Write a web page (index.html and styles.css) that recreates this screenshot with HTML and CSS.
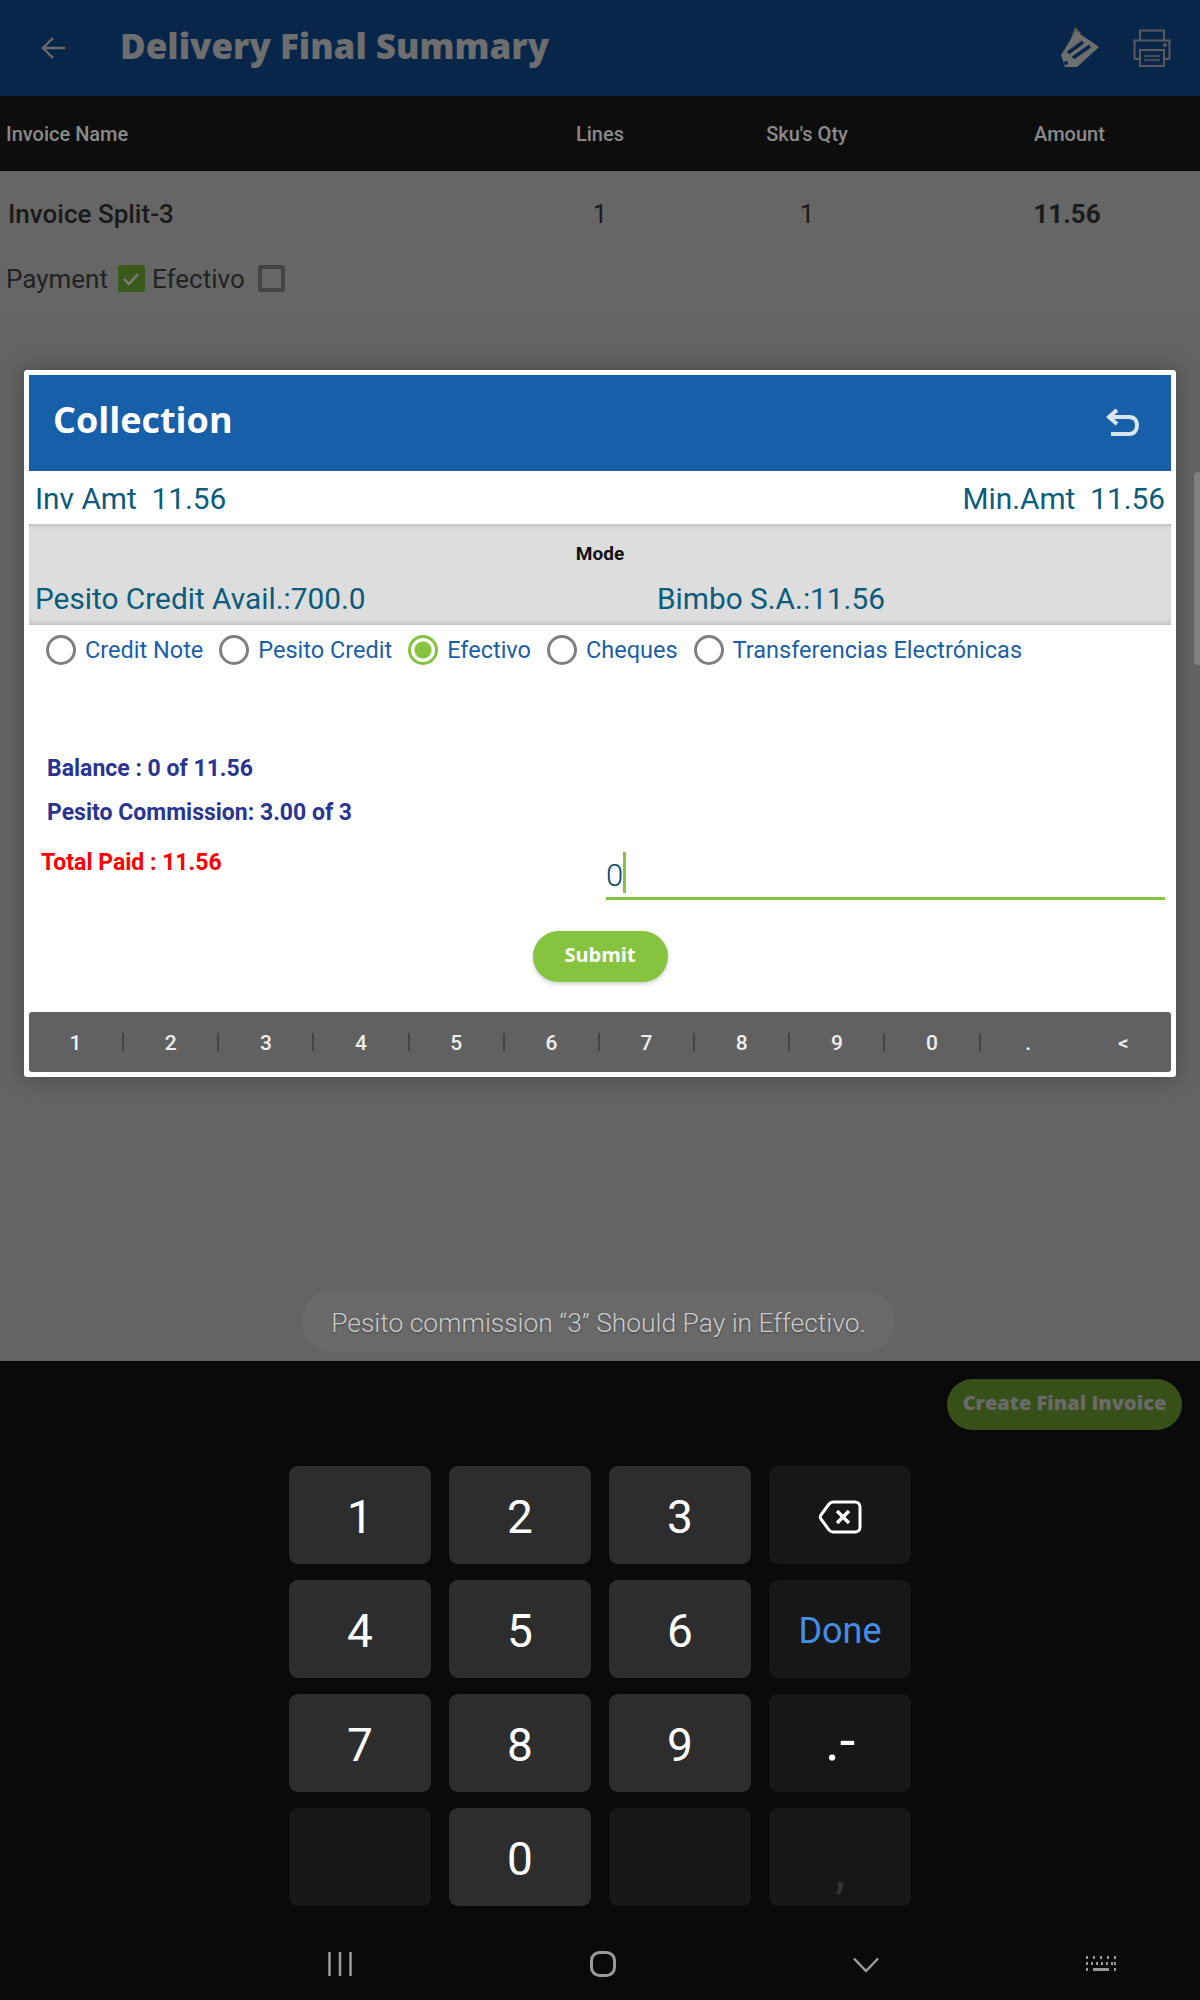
FILE: index.html
```html
<!DOCTYPE html>
<html lang="en">
<head>
    <meta charset="UTF-8">
    <title>Delivery Final Summary</title>
    <link rel="stylesheet" href="styles.css">
</head>
<body>

<div class="screen">
    <header class="app-bar">
        <svg class="back-icon" width="30" height="30" viewBox="0 0 30 30"><path d="M26 15H5M14 5 4 15l10 10" fill="none" stroke="#6b6b6b" stroke-width="2.4"/></svg>
        <h1>Delivery Final Summary</h1>
        <svg class="pen-icon" width="40" height="42" viewBox="0 0 40 42">
            <path d="M10 14 15 0l6 6z" fill="#5a5a5a"/>
            <path d="M16 4 39 20 17 40H5L1 28z" fill="#6e6e6e"/>
            <path d="M8 26 23 15M13 31 30 19" stroke="#07264a" stroke-width="3.500"/>
            <circle cx="6" cy="36" r="2" fill="#07264a"/>
        </svg>
        <svg class="print-icon" width="38" height="38" viewBox="0 0 38 38" fill="none" stroke="#5a5a5a" stroke-width="2">
            <path d="M7 11V1.500h24V11"/>
            <path d="M7 30H1.500V11.500h35V30H31"/>
            <rect x="7" y="21" width="24" height="16"/>
            <path d="M11 27h16M11 31h16" stroke-width="1.500"/>
            <circle cx="32" cy="16" r="1" fill="#5a5a5a"/>
        </svg>
    </header>

    <div class="table-head">
        <span class="col-name">Invoice Name</span>
        <span class="col-lines">Lines</span>
        <span class="col-qty">Sku's Qty</span>
        <span class="col-amount">Amount</span>
    </div>

    <div class="table-row">
        <span class="col-name">Invoice Split-3</span>
        <span class="col-lines">1</span>
        <span class="col-qty">1</span>
        <span class="col-amount"><b>11.56</b></span>
    </div>

    <div class="payment-row">
        <span>Payment</span>
        <span class="check check-on">
            <svg width="20" height="20" viewBox="0 0 20 20"><path d="M3 10l5 5 9-10" fill="none" stroke="#7d7d7d" stroke-width="2.400"/></svg>
        </span>
        <span>Efectivo</span>
        <span class="check check-off"></span>
    </div>

    <div class="page-rest"></div>

    <div class="modal">
        <div class="modal-head">
            <h2>Collection</h2>
            <svg width="34" height="32" viewBox="0 0 34 32"><path d="M11 3 3 10l8 7M4 10h19c6 0 8 4 8 8s-2 9-8 9H5" fill="none" stroke="#dbe5f0" stroke-width="4"/></svg>
        </div>

        <div class="amounts">
            <span>Inv Amt&nbsp; 11.56</span>
            <span>Min.Amt&nbsp; 11.56</span>
        </div>

        <div class="mode-panel">
            <div class="mode-title">Mode</div>
            <div class="mode-values">
                <span class="credit-avail">Pesito Credit Avail.:700.0</span>
                <span>Bimbo S.A.:11.56</span>
            </div>
        </div>

        <div class="radios">
            <span class="radio"></span><span class="radio-label">Credit Note</span>
            <span class="radio"></span><span class="radio-label">Pesito Credit</span>
            <span class="radio radio-on"></span><span class="radio-label">Efectivo</span>
            <span class="radio"></span><span class="radio-label">Cheques</span>
            <span class="radio"></span><span class="radio-label">Transferencias Electrónicas</span>
        </div>

        <div class="balance">
            <p>Balance : 0 of 11.56</p>
            <p>Pesito Commission: 3.00 of 3</p>
        </div>

        <div class="pay-row">
            <div class="total-paid">Total Paid : 11.56</div>
            <div class="amount-input"><span>0</span><i class="caret"></i></div>
        </div>

        <button class="submit">Submit</button>

        <div class="num-strip">
            <span>1</span><span>2</span><span>3</span><span>4</span>
            <span>5</span><span>6</span><span>7</span><span>8</span>
            <span>9</span><span>0</span><span>.</span><span>&lt;</span>
        </div>
    </div>

    <div class="scroll-thumb"></div>
    <div class="toast">Pesito commission “3” Should Pay in Effectivo.</div>

    <div class="keyboard">
        <div class="invoice-row">
            <button class="final-invoice">Create Final Invoice</button>
        </div>
        <div class="keys">
            <div class="key">1</div>
            <div class="key">2</div>
            <div class="key">3</div>
            <div class="key key-dark">
                <svg width="44" height="34" viewBox="0 0 44 34" fill="none" stroke="#fff" stroke-width="3">
                    <path d="M15 2h22c3 0 5 2 5 5v20c0 3-2 5-5 5H15c-2 0-3-1-4-2L3 19c-1-1-1-3 0-4l8-11c1-1 2-2 4-2z"/>
                    <path d="M19 11l12 12M31 11 19 23" stroke-width="3.500"/>
                </svg>
            </div>
            <div class="key">4</div>
            <div class="key">5</div>
            <div class="key">6</div>
            <div class="key key-dark key-done">Done</div>
            <div class="key">7</div>
            <div class="key">8</div>
            <div class="key">9</div>
            <div class="key key-dark key-symbol">.-</div>
            <div class="key key-dark"></div>
            <div class="key">0</div>
            <div class="key key-dark"></div>
            <div class="key key-dark key-comma">,</div>
        </div>
        <nav class="nav-bar">
            <svg class="nav-recent" width="24" height="24" viewBox="0 0 24 24"><path d="M1.500 0v24M12 0v24M22.500 0v24" stroke="#9a9a9a" stroke-width="2.500"/></svg>
            <svg class="nav-home" width="26" height="26" viewBox="0 0 26 26"><rect x="1.500" y="1.500" width="23" height="23" rx="8" fill="none" stroke="#9a9a9a" stroke-width="3"/></svg>
            <svg class="nav-down" width="26" height="16" viewBox="0 0 26 16"><path d="M1 1.500 13 14 25 1.500" fill="none" stroke="#9a9a9a" stroke-width="2.500"/></svg>
            <svg class="nav-kbd" width="30" height="16" viewBox="0 0 30 16" fill="#9a9a9a">
                <path d="M0 0h2v3H0zM7 0h2v3H7zM14 0h2v3h-2zM21 0h2v3h-2zM28 0h2v3h-2zM0 6h2v3H0zM5 6h2v3H5zM10 6h2v3h-2zM15 6h2v3h-2zM20 6h2v3h-2zM25 6h2v3h-2zM28 6h2v3h-2zM0 12h2v3H0zM7 12h16v3H7zM28 12h2v3h-2z"/>
            </svg>
        </nav>
    </div>
</div>

</body>
</html>
```

FILE: styles.css
```css
* {
    box-sizing: border-box;
}

body {
    margin: 0;
    font-family: Roboto, sans-serif;
}

.screen {
    position: relative;
    width: 1200px;
    height: 2000px;
    overflow: hidden;
    display: flex;
    flex-direction: column;
    background: #666;
}

/* top bar */
.app-bar {
    height: 96px;
    background: #07264a;
    display: flex;
    align-items: center;
    padding: 0 29px 0 39px;
}

.app-bar h1 {
    margin: 0 0 5px 51px;
    flex: 1;
    font-family: "Open Sans", sans-serif;
    font-size: 35px;
    font-weight: 800;
    color: #6e6e6e;
}

.pen-icon {
    margin-right: 33px;
}

/* invoice table */
.table-head, .table-row {
    display: grid;
    grid-template-columns: 540px 120px 294px 1fr;
    align-items: center;
    text-align: center;
}

.table-head {
    height: 75px;
    background: #0d0d0d;
    color: #8a8a8a;
    font-size: 20px;
    font-weight: 500;
}

.table-head .col-amount {
    padding-right: 15px;
}

.table-row {
    height: 86px;
    font-size: 26px;
    font-weight: 400;
    color: #1a1a1a;
}

.col-name {
    text-align: left;
    padding-left: 6px;
}

.table-row .col-name {
    padding-left: 8px;
    font-weight: 500;
}

.table-row .col-amount {
    padding-right: 20px;
}

.payment-row {
    height: 62px;
    padding: 0 0 18px 6px;
    display: flex;
    align-items: center;
    gap: 10px;
    font-size: 26px;
    color: #222;
    border-bottom: 1px solid #636363;
}

.check {
    width: 27px;
    height: 27px;
    border: 4px solid #444;
    border-radius: 3px;
    display: flex;
    align-items: center;
    justify-content: center;
}

.check-on {
    background: #3a5a1c;
    border: none;
    margin-right: -3px;
}

.check-off {
    margin-left: 3px;
}

.page-rest {
    flex: 1;
    background: #646464;
}

/* collection dialog */
.modal {
    position: absolute;
    top: 370px;
    left: 24px;
    width: 1152px;
    height: 707px;
    padding: 5px;
    background: #fff;
    border-radius: 3px;
    box-shadow: 0 0 24px rgba(0,0,0,0.3);
}

.modal-head {
    height: 96px;
    background: #185fa9;
    display: flex;
    align-items: center;
    justify-content: space-between;
    padding: 0 31px 0 24px;
}

.modal-head h2 {
    margin: 0 0 8px 0;
    font-family: "Open Sans", sans-serif;
    font-size: 36px;
    font-weight: 700;
    color: #fff;
}

.amounts {
    height: 53px;
    display: flex;
    justify-content: space-between;
    align-items: center;
    padding: 2px 6px 0;
    font-size: 29.8px;
    font-weight: 400;
    color: #0a5c7c;
}

.mode-panel {
    height: 101px;
    background: #dddddd;
    box-shadow: inset 0 5px 4px -3px rgba(0,0,0,0.15), inset 0 -5px 4px -3px rgba(0,0,0,0.15);
}

.mode-title {
    text-align: center;
    font-size: 19px;
    font-weight: 700;
    color: #111;
    padding-top: 18px;
    line-height: 24px;
}

.mode-values {
    display: flex;
    padding: 15px 6px 0;
    font-size: 29.8px;
    font-weight: 400;
    color: #0a5c7c;
    line-height: 36px;
}

.credit-avail {
    width: 622px;
}

.radios {
    height: 50px;
    display: flex;
    align-items: center;
    padding: 0 0 0 17px;
    font-size: 23.5px;
    color: #1a5fa8;
}

.radio {
    width: 30px;
    height: 30px;
    border: 3px solid #808080;
    border-radius: 50%;
    margin-right: 9px;
}

.radio-on {
    border-color: #86c440;
    background: radial-gradient(circle, #86c440 0 8px, #fff 9px);
}

.radio-label {
    margin-right: 16px;
}

.balance {
    margin-top: 72px;
    padding-left: 18px;
    font-size: 23px;
    font-weight: 700;
    color: #2a3592;
}

.balance p {
    margin: 0;
    line-height: 44px;
}

.pay-row {
    margin-top: 5px;
    height: 60px;
    display: flex;
}

.total-paid {
    width: 577px;
    padding-left: 12px;
    font-size: 23px;
    font-weight: 700;
    color: #f00;
    line-height: 46px;
}

.amount-input {
    width: 559px;
    height: 60px;
    border-bottom: 3px solid #86c440;
    display: flex;
    align-items: center;
    font-size: 31px;
    font-weight: 300;
    color: #0a4a6a;
    padding-top: 14px;
}

.caret {
    width: 3px;
    height: 41px;
    margin: -6px 0 0 0;
    background: #86c440;
}

.submit {
    display: block;
    width: 135px;
    height: 51px;
    margin: 31px auto 0;
    padding: 0 0 4px;
    border: none;
    border-radius: 26px;
    background: #86c440;
    box-shadow: 0 2px 4px rgba(0,0,0,0.2);
    color: #fff;
    font-family: "Open Sans", sans-serif;
    font-size: 20px;
    font-weight: 700;
}

.num-strip {
    margin-top: 30px;
    height: 60px;
    background: #616161;
    border-radius: 3px;
    display: grid;
    grid-template-columns: repeat(12, 1fr);
    align-items: center;
    color: #eee;
    font-size: 21px;
    font-weight: 500;
    text-align: center;
}

.num-strip span {
    height: 18px;
    line-height: 20px;
    border-right: 2px solid #444;
}

.num-strip span:nth-child(n+11) {
    border-right: none;
}

.scroll-thumb {
    position: absolute;
    top: 472px;
    right: 0;
    width: 6px;
    height: 193px;
    background: #808080;
    border-radius: 4px 0 0 4px;
}

.toast {
    position: absolute;
    top: 1290px;
    left: 302px;
    width: 593px;
    height: 62px;
    padding-top: 2px;
    border-radius: 31px;
    background: #696969;
    color: #ccc;
    font-size: 26.4px;
    font-weight: 300;
    text-align: center;
    line-height: 62px;
    text-shadow: 0 1px 2px rgba(0,0,0,0.4);
}

/* keyboard */
.keyboard {
    height: 639px;
    background: #0a0a0a;
}

.invoice-row {
    display: flex;
    justify-content: flex-end;
    padding: 18px 18px 0 0;
}

.final-invoice {
    width: 235px;
    height: 51px;
    padding: 0 0 4px;
    border: none;
    border-radius: 26px;
    background: #375019;
    color: #6a6a6a;
    font-family: "Open Sans", sans-serif;
    font-size: 20px;
    font-weight: 800;
}

.keys {
    margin: 36px 0 0 289px;
    width: 623px;
    display: grid;
    grid-template-columns: repeat(4, 142px);
    grid-auto-rows: 98px;
    gap: 16px 18px;
}

.key {
    border-radius: 9px;
    background: #2d2d2d;
    color: #fff;
    font-size: 46px;
    font-weight: 400;
    padding-top: 4px;
    display: flex;
    align-items: center;
    justify-content: center;
}

.key-dark {
    background: #171717;
}

.key-done {
    color: #448ee8;
    font-size: 36px;
}

.key-symbol {
    font-size: 56px;
    padding: 0 0 4px;
}

.key-comma {
    color: #333;
    font-size: 52px;
    padding-top: 26px;
}

.nav-bar {
    position: relative;
    height: 96px;
}

.nav-bar svg {
    position: absolute;
}

.nav-recent {
    left: 328px;
    top: 46px;
}

.nav-home {
    left: 590px;
    top: 45px;
}

.nav-down {
    left: 853px;
    top: 51px;
}

.nav-kbd {
    left: 1086px;
    top: 50px;
}
```
